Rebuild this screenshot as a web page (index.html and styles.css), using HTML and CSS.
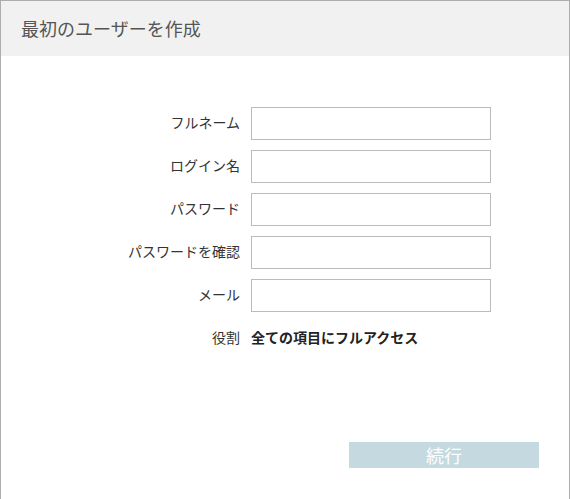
FILE: index.html
```html
<!DOCTYPE html>
<html lang="ja">
<head>
<meta charset="utf-8">
<link rel="stylesheet" href="styles.css">
</head>
<body>
<div class="panel">
  <div class="header"><h1 class="title">最初のユーザーを作成</h1></div>
  <form class="form">
    <label class="label">フルネーム</label><input class="field" type="text">
    <label class="label">ログイン名</label><input class="field" type="text">
    <label class="label">パスワード</label><input class="field" type="password">
    <label class="label">パスワードを確認</label><input class="field" type="password">
    <label class="label">メール</label><input class="field" type="text">
    <span class="label">役割</span><span class="role">全ての項目にフルアクセス</span>
  </form>
  <div class="actions"><button class="btn" type="button">続行</button></div>
</div>
</body>
</html>
```
FILE: styles.css
```css
html, body {
  margin: 0;
  padding: 0;
  background: #fff;
}
body {
  font-family: "Noto Sans CJK JP", "Noto Sans", sans-serif;
  color: #333;
}
.panel {
  width: 570px;
  min-height: 499px;
  box-sizing: border-box;
  border: 1px solid #adadad;
  border-bottom: none;
}
.header {
  height: 55px;
  background: #f1f1f1;
  display: flex;
  align-items: center;
  padding-left: 20px;
}
.title {
  margin: 0;
  font-size: 18px;
  font-weight: normal;
  color: #555;
  line-height: 24px;
  padding-bottom: 2px;
}
.form {
  display: grid;
  grid-template-columns: 239px 240px;
  column-gap: 11px;
  row-gap: 10px;
  grid-auto-rows: 33px;
  padding-top: 51px;
  margin: 0;
}
.label {
  font-size: 14px;
  line-height: 18px;
  color: #333;
  text-align: right;
  align-self: center;
  padding-bottom: 3px;
}
.field {
  box-sizing: border-box;
  width: 240px;
  height: 33px;
  border: 1px solid #bbb;
  margin: 0;
  padding: 0 6px;
  background: #fff;
  outline: none;
}
.role {
  font-size: 14px;
  line-height: 18px;
  font-weight: 700;
  color: #222;
  align-self: center;
  padding-bottom: 3px;
}
.actions {
  display: flex;
  justify-content: flex-end;
  padding-right: 30px;
  margin-top: 87px;
}
.btn {
  width: 190px;
  height: 26px;
  border: none;
  background: #c5d9e0;
  color: #fff;
  font-family: "Noto Sans CJK JP", sans-serif;
  font-size: 18px;
  padding: 0;
  line-height: 26px;
}
```
